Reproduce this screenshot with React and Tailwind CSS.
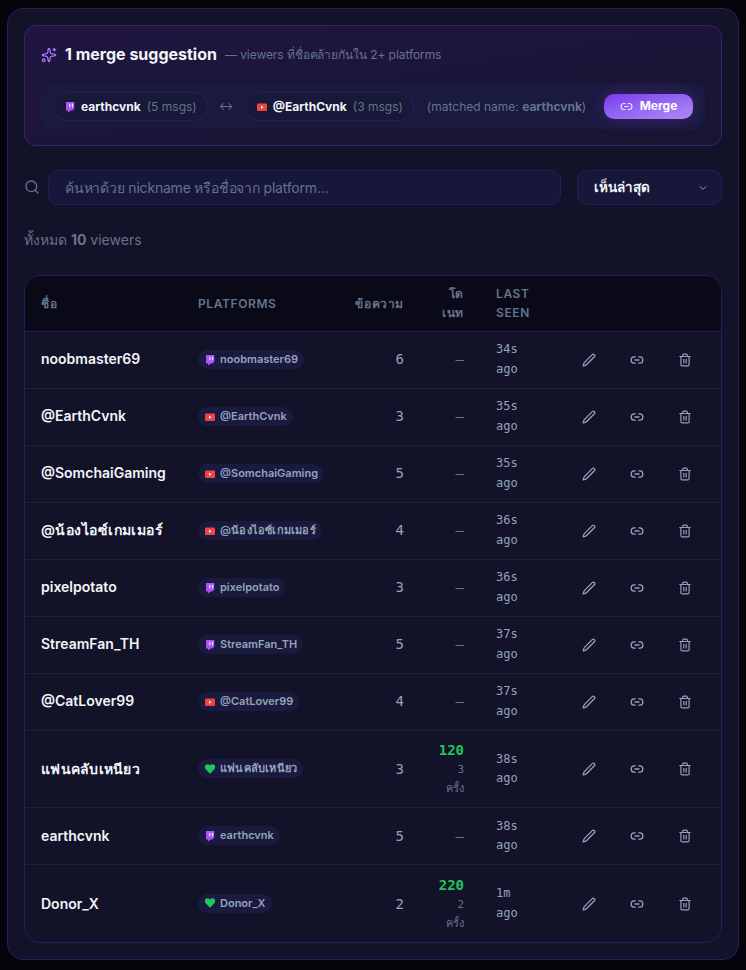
import { Sparkles, Search, ChevronDown, Trash2 } from "lucide-react";

const viewers = [
  { name: "noobmaster69", platform: "twitch", msgs: 6, seen: "34s" },
  { name: "@EarthCvnk", platform: "youtube", msgs: 3, seen: "35s" },
  { name: "@SomchaiGaming", platform: "youtube", msgs: 5, seen: "35s" },
  { name: "@น้องไอซ์เกมเมอร์", platform: "youtube", msgs: 4, seen: "36s", tracking: "tracking-[0.45px]" },
  { name: "pixelpotato", platform: "twitch", msgs: 3, seen: "36s" },
  { name: "StreamFan_TH", platform: "twitch", msgs: 5, seen: "37s" },
  { name: "@CatLover99", platform: "youtube", msgs: 4, seen: "37s" },
  { name: "แฟนคลับเหนียว", platform: "tip", msgs: 3, seen: "38s", total: 120, times: 3, tracking: "tracking-[0.25px]" },
  { name: "earthcvnk", platform: "twitch", msgs: 5, seen: "38s" },
  { name: "Donor_X", platform: "tip", msgs: 2, seen: "1m", total: 220, times: 2 },
];

function PlatformIcon({ platform }) {
  if (platform === "twitch")
    return (
      <svg width="12" height="12" viewBox="0 0 12 12" className="shrink-0">
        <path d="M2 1h8.300v6.500L8.500 9.500H6.500L5 11H4V9.500H2z" fill="#a855f7" />
        <path d="M5.800 2.800v3.400M8.500 2.800v3.400" stroke="#f3e8ff" strokeWidth="1.100" />
      </svg>
    );
  if (platform === "youtube")
    return (
      <svg width="12" height="12" viewBox="0 0 12 12" className="shrink-0">
        <rect x="1" y="2.500" width="10" height="7.500" rx="1" fill="#ef4444" />
        <path d="M5 4.700v3l2.500-1.500z" fill="#fff" />
      </svg>
    );
  return (
    <svg width="12" height="12" viewBox="0 0 24 24" className="shrink-0">
      <path
        d="M12 21.500 3.600 13C1 10.300 1 6.400 3.200 4.200c2.300-2.300 6.200-2.200 8.800.9 2.600-3.100 6.500-3.200 8.800-.9 2.200 2.200 2.200 6.100-.4 8.800z"
        fill="#22c55e"
      />
    </svg>
  );
}

function LinkIcon({ size = 14 }) {
  return (
    <svg
      width={size}
      height={size}
      viewBox="0 0 24 24"
      fill="none"
      stroke="currentColor"
      strokeWidth="2.2"
      strokeLinecap="round"
      strokeLinejoin="round"
    >
      <path d="M9 17.500H7a5 5.500 0 0 1 0-11h2M15 6.500h2a5 5.500 0 0 1 0 11h-2M8.500 12h7" />
    </svg>
  );
}

function PencilIcon() {
  return (
    <svg
      width="14"
      height="14"
      viewBox="0 0 24 24"
      fill="none"
      stroke="currentColor"
      strokeWidth="2.2"
      strokeLinecap="round"
      strokeLinejoin="round"
    >
      <path d="M17.600 2.800a2.500 2.500 0 0 1 3.600 3.600L8 19.600c-1.300 1.300-3.500 2-6 2.400.4-2.500 1.100-4.700 2.400-6z" />
    </svg>
  );
}

function MergePill({ platform, name, count }) {
  return (
    <span className="flex h-[29px] items-center gap-1.5 rounded-full border border-[#2b1b5c] bg-[#181838] px-[10px] text-xs whitespace-nowrap">
      <PlatformIcon platform={platform} />
      <span className="-ml-px font-bold text-slate-100">{name}</span>
      <span className="text-[#64748b]">({count} msgs)</span>
    </span>
  );
}

function MergeSuggestion() {
  return (
    <section className="h-[121px] rounded-xl border border-[#3b1f75] bg-linear-to-br from-[#1f1540] to-[#1a1432] p-4">
      <div className="flex h-[26px] items-center">
        <Sparkles size={16} className="text-[#a371f7]" />
        <h2 className="ml-2 pb-0.5 text-base font-bold text-slate-100">1 merge suggestion</h2>
        <p className="ml-2 text-xs tracking-[-0.08px] text-[#64748b]">— viewers ที่ชื่อคล้ายกันใน 2+ platforms</p>
      </div>
      <div className="mt-4 flex h-[45px] items-center rounded-lg bg-[#1a1a3e] px-3">
        <MergePill platform="twitch" name="earthcvnk" count={5} />
        <span className="mx-3 flex w-[13px] justify-center text-[11px] text-[#64748b]">↔</span>
        <MergePill platform="youtube" name="@EarthCvnk" count={3} />
        <span className="ml-[13px] text-xs whitespace-nowrap text-[#64748b]">
          (matched name: <b className="font-bold">earthcvnk</b>)
        </span>
        <button className="ml-auto flex h-[25px] w-[89px] shrink-0 items-center justify-center gap-[7px] rounded-[10px] bg-linear-to-br from-[#7c3aed] to-[#b08af5] pb-px text-xs font-bold text-white shadow-[0_0_16px_rgba(124,58,237,0.35)]">
          <span className="opacity-80"><LinkIcon size={13} /></span>
          <span>Merge</span>
        </button>
      </div>
    </section>
  );
}

function ViewerRow({ viewer, compact, last }) {
  const line = last ? "" : "border-b border-[#20203a]";
  const lift = compact ? "pb-0.5" : "";
  return (
    <tr className={viewer.total ? "h-[77px]" : "h-[57px]"}>
      <td className={`px-4 text-sm font-semibold whitespace-nowrap text-slate-100 ${viewer.tracking ?? ""} ${lift} ${line}`}>
        {viewer.name}
      </td>
      <td className={`px-4 pb-px ${line}`}>
        <span className="flex h-[19px] w-fit items-center gap-1 rounded-full bg-[#1a1a3e] px-[6px] text-[11px] font-semibold whitespace-nowrap text-[#94a3b8]">
          <PlatformIcon platform={viewer.platform} />
          <span className={viewer.tracking ? "tracking-[0.2px]" : ""}>{viewer.name}</span>
        </span>
      </td>
      <td className={`px-4 text-right font-[DejaVu_Sans_Mono,monospace] text-sm text-[#94a3b8] ${lift} ${line}`}>
        {viewer.msgs}
      </td>
      <td className={`px-4 text-right font-[DejaVu_Sans_Mono,monospace] text-sm text-[#64748b] ${lift} ${line}`}>
        {viewer.total ? (
          <>
            <div className="leading-[20px] font-bold text-[#22c55e]">{viewer.total}</div>
            <div className="text-[11px] leading-[19px]">
              {viewer.times}
              <br />
              ครั้ง
            </div>
          </>
        ) : (
          "—"
        )}
      </td>
      <td
        className={`px-4 font-[DejaVu_Sans_Mono,monospace] text-xs text-[#94a3b8] ${
          compact ? "leading-[20px]" : "leading-[19.500px]"
        } ${lift} ${line}`}
      >
        {viewer.seen}
        <br />
        ago
      </td>
      <td className={`pr-3 ${line}`}>
        <div className="flex justify-end text-[#94a3b8]">
          <button className="flex w-12 justify-center"><PencilIcon /></button>
          <button className="flex w-12 justify-center"><LinkIcon /></button>
          <button className="flex w-12 justify-center"><Trash2 size={14} /></button>
        </div>
      </td>
    </tr>
  );
}

export default function App() {
  const th = "border-b border-[#2b1b5c] px-4 font-semibold";
  return (
    <div className="h-[970px] w-[746px] bg-[#04040a] pt-2 pl-[7px] font-[Inter,sans-serif]">
      <main className="h-[952px] w-[732px] rounded-2xl border border-[#2b1b5c] bg-[#121228] p-4">
        <MergeSuggestion />

        <div className="mt-6 flex h-[35px] items-center">
          <Search size={16} className="mb-px text-[#64748b]" />
          <input
            className="ml-2 h-[35px] w-[513px] rounded-[10px] border border-[#2b1b5c] bg-[#17173a] px-4 text-sm tracking-[-0.2px] placeholder:text-[#64748b]"
            placeholder="ค้นหาด้วย nickname หรือชื่อจาก platform..."
          />
          <button className="ml-4 flex h-[35px] flex-1 items-center justify-between rounded-[10px] border border-[#2b1b5c] bg-[#17173a] px-4 text-[13.500px] font-semibold text-slate-100">
            เห็นล่าสุด
            <ChevronDown size={12} className="-mr-1 text-[#94a3b8]" />
          </button>
        </div>

        <p className="mt-6 h-[22px] text-sm leading-[22px] text-[#64748b]">
          ทั้งหมด <b className="font-bold">10</b> viewers
        </p>

        <div className="mt-6 overflow-hidden rounded-2xl border border-[#2b1b5c]">
          <table className="w-full table-fixed border-separate border-spacing-0">
            <colgroup>
              <col className="w-[157px]" />
              <col className="w-[150px]" />
              <col className="w-[88px]" />
              <col className="w-[60px]" />
              <col className="w-[72px]" />
              <col />
            </colgroup>
            <thead>
              <tr className="h-[56px] bg-[#0a0918] text-left text-xs leading-[19px] tracking-[0.6px] text-[#64748b]">
                <th className={th}>ชื่อ</th>
                <th className={th}>PLATFORMS</th>
                <th className={`${th} text-right whitespace-nowrap`}>ข้อความ</th>
                <th className={`${th} pb-[2px] text-right`}>โด<br />เนท</th>
                <th className={`${th} pb-[2px]`}>LAST<br />SEEN</th>
                <th className={th}></th>
              </tr>
            </thead>
            <tbody>
              {viewers.map((viewer, i) => (
                <ViewerRow
                  key={viewer.name}
                  viewer={viewer}
                  compact={i < 7}
                  last={i === viewers.length - 1}
                />
              ))}
            </tbody>
          </table>
        </div>
      </main>
    </div>
  );
}
